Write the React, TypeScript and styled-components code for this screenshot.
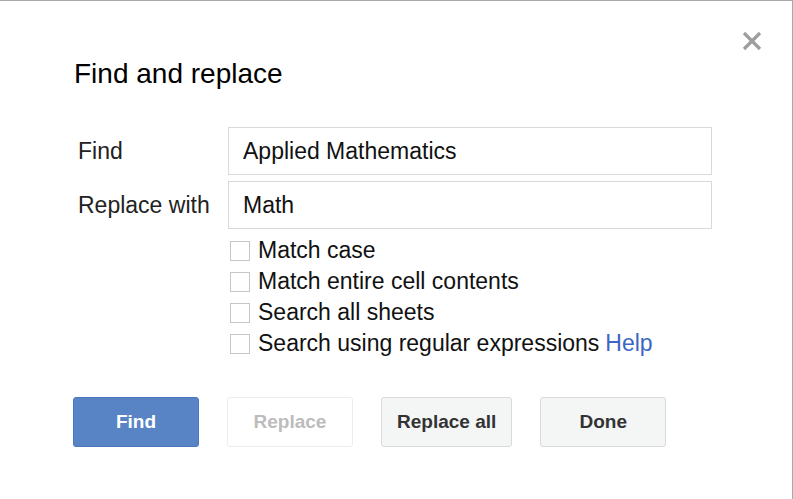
import styled, { createGlobalStyle } from "styled-components";

const GlobalStyle = createGlobalStyle`
  html, body {
    margin: 0;
    padding: 0;
    background: #fff;
  }
  body {
    font-family: "Liberation Sans", Arial, sans-serif;
  }
`;

const Dialog = styled.div`
  box-sizing: border-box;
  width: 793px;
  height: 499px;
  padding: 30px 30px 0 74px;
  border-top: 1px solid #a9a9a9;
  border-right: 1px solid #a9a9a9;
  background: #fff;
  display: flex;
  flex-direction: column;
`;

const Header = styled.div`
  display: flex;
  justify-content: space-between;
  align-items: flex-start;
`;

const Title = styled.h1`
  margin: 27px 0 0;
  font-size: 28px;
  line-height: 32px;
  font-weight: normal;
  color: #000;
`;

const Close = styled.button`
  width: 20px;
  height: 20px;
  padding: 0;
  border: none;
  background: none;
  cursor: pointer;
  display: flex;
`;

const Form = styled.div`
  margin-top: 37px;
  display: flex;
  flex-direction: column;
  gap: 6px;
`;

const Row = styled.div`
  display: grid;
  grid-template-columns: 154px 484px;
  align-items: center;
`;

const Label = styled.label`
  padding-left: 4px;
  font-size: 23px;
  color: #222;
`;

const Field = styled.input`
  box-sizing: border-box;
  height: 48px;
  padding: 0 14px;
  border: 1px solid #d9d9d9;
  font-family: "Liberation Sans", Arial, sans-serif;
  font-size: 23px;
  color: #111;
  outline: none;
`;

const Options = styled.div`
  margin: 6px 0 0 156px;
  display: flex;
  flex-direction: column;
`;

const Option = styled.label`
  height: 31px;
  display: flex;
  align-items: center;
  gap: 8px;
  font-size: 23px;
  color: #111;
`;

const Box = styled.span`
  box-sizing: border-box;
  width: 20px;
  height: 20px;
  border: 1px solid #c6c6c6;
  background: #fff;
`;

const HelpLink = styled.a`
  color: #3a67c2;
  text-decoration: none;
  margin-left: 6px;
`;

const Buttons = styled.div`
  margin: 38px 0 0 -1px;
  display: flex;
  gap: 28px;
`;

const Button = styled.button<{ $kind: "primary" | "disabled" | "plain" }>`
  box-sizing: border-box;
  height: 50px;
  min-width: 126px;
  padding: 0 15px;
  border-radius: 3px;
  font-family: "Liberation Sans", Arial, sans-serif;
  font-size: 19px;
  font-weight: bold;
  border: 1px solid
    ${(p) =>
      p.$kind === "primary" ? "#4a78bd" : p.$kind === "disabled" ? "#ededed" : "#d9d9d9"};
  background: ${(p) =>
    p.$kind === "primary" ? "#5884c6" : p.$kind === "disabled" ? "#fff" : "#f4f5f5"};
  color: ${(p) =>
    p.$kind === "primary" ? "#fff" : p.$kind === "disabled" ? "#bcbcbc" : "#333"};
`;

const options = [
  "Match case",
  "Match entire cell contents",
  "Search all sheets",
  "Search using regular expressions",
];

export default function App() {
  return (
    <>
      <GlobalStyle />
      <Dialog>
        <Header>
          <Title>Find and replace</Title>
          <Close aria-label="Close">
            <svg width="20" height="20" viewBox="0 0 20 20">
              <path
                d="M2 2 L18 18 M18 2 L2 18"
                stroke="#9e9e9e"
                strokeWidth="3.2"
                fill="none"
              />
            </svg>
          </Close>
        </Header>
        <Form>
          <Row>
            <Label>Find</Label>
            <Field defaultValue="Applied Mathematics" />
          </Row>
          <Row>
            <Label>Replace with</Label>
            <Field defaultValue="Math" />
          </Row>
        </Form>
        <Options>
          {options.map((o, i) => (
            <Option key={o}>
              <Box />
              <span>
                {o}
                {i === options.length - 1 && <HelpLink href="#">Help</HelpLink>}
              </span>
            </Option>
          ))}
        </Options>
        <Buttons>
          <Button $kind="primary">Find</Button>
          <Button $kind="disabled">Replace</Button>
          <Button $kind="plain">Replace all</Button>
          <Button $kind="plain">Done</Button>
        </Buttons>
      </Dialog>
    </>
  );
}
